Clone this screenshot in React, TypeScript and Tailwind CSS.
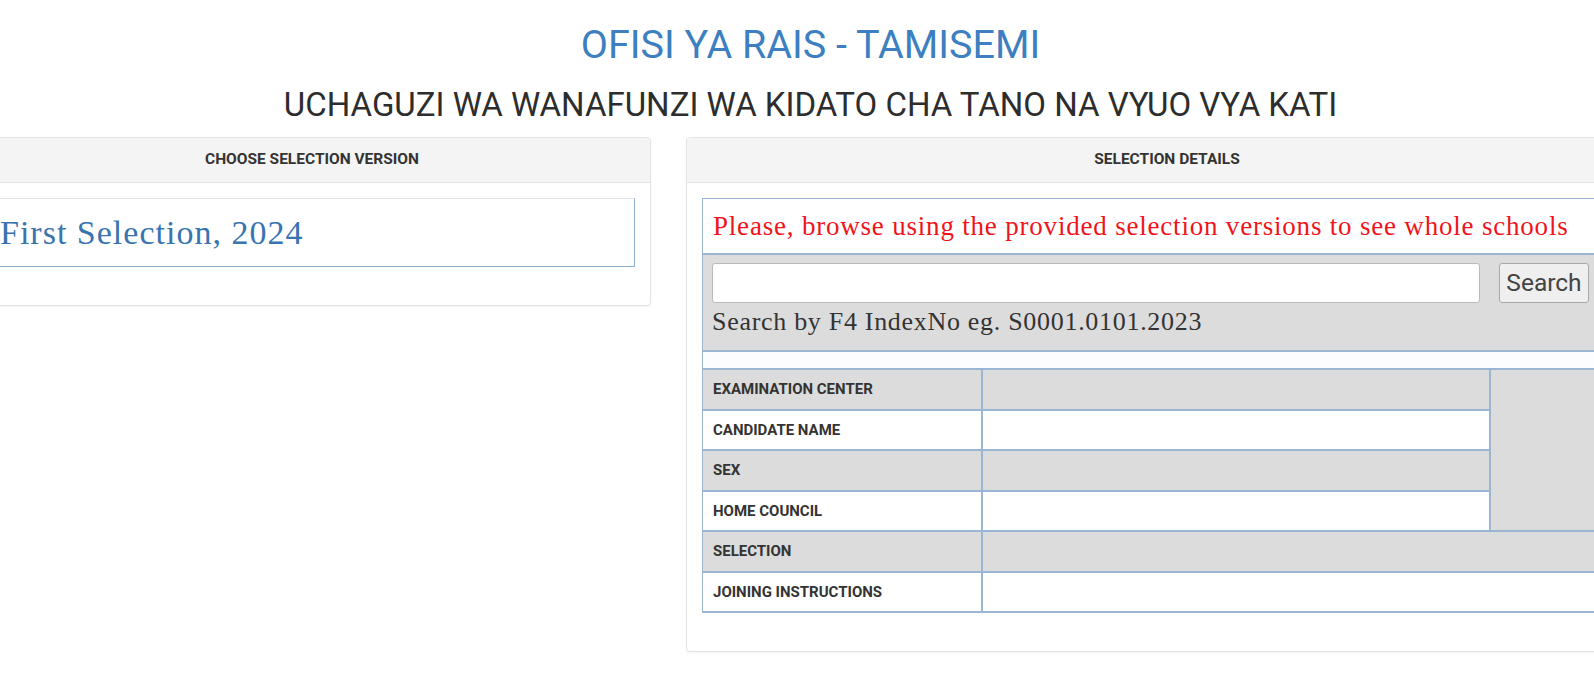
const rows = [
  { label: "EXAMINATION CENTER", gray: true },
  { label: "CANDIDATE NAME", gray: false },
  { label: "SEX", gray: true },
  { label: "HOME COUNCIL", gray: false },
];

const roboto = "font-['Roboto',sans-serif]";
const serif = "font-['Liberation_Serif','Times_New_Roman',serif]";
const line = "border-[#9ab6d3]";

function PanelHeader({ title }: { title: string }) {
  return (
    <div className={`h-[45px] flex items-center justify-center bg-[#f4f4f4] border-b border-[#e4e4e4] rounded-t-[4px] text-[15.5px] font-bold text-[#333] ${roboto}`}>
      {title}
    </div>
  );
}

function Row({ label, gray }: { label: string; gray: boolean }) {
  return (
    <div className={`h-[40.5px] flex border-b-2 ${line} ${gray ? "bg-[#dcdcdc]" : "bg-white"}`}>
      <div className={`w-[280px] flex items-center px-[10px] border-r-2 ${line}`}>{label}</div>
      <div className="flex-1" />
    </div>
  );
}

export default function App() {
  return (
    <div className="w-full h-[684px] overflow-hidden bg-white">
      <div className={`pl-[27px] text-center ${roboto}`}>
        <h1 className="pt-[22px] text-[39.5px] leading-[46px] text-[#3d7fc1]">OFISI YA RAIS - TAMISEMI</h1>
        <h2 className="mt-[18px] text-[33px] leading-[38px] text-[#2d2d2d]">
          UCHAGUZI WA WANAFUNZI WA KIDATO CHA TANO NA VYUO VYA KATI
        </h2>
      </div>

      <div className="ml-[-27px] w-[1675px] mt-[13px] flex items-start gap-[35px]">
        {/* LEFT: VERSIONS */}
        <div className="w-[678px] shrink-0 bg-white border border-[#e4e4e4] rounded-[4px] shadow-[0_1px_2px_rgba(0,0,0,0.05)]">
          <PanelHeader title="CHOOSE SELECTION VERSION" />
          <div className="px-[15px] pt-[15px] pb-[38px]">
            <div className="h-[69px] flex items-center px-[10px] border border-[#e3e3e3] border-r-[#8eb0d0] border-b-[#8eb0d0]">
              <span className={`text-[34px] leading-[39px] tracking-[1px] text-[#3a74b0] ${serif}`}>First Selection, 2024</span>
            </div>
          </div>
        </div>

        {/* RIGHT: DETAILS */}
        <div className="w-[962px] shrink-0 bg-white border border-[#e4e4e4] rounded-[4px] shadow-[0_1px_2px_rgba(0,0,0,0.05)]">
          <PanelHeader title="SELECTION DETAILS" />
          <div className="px-[15px] pt-[15px] pb-[38px]">
            <div className={`border-l border-t ${line}`}>
              <div className={`h-[54px] flex items-center px-[10px] text-[27px] leading-[31px] tracking-[0.8px] text-[#f0141a] ${serif}`}>
                Please, browse using the provided selection versions to see whole schools
              </div>
              <div className={`h-[97px] bg-[#dcdcdc] border-t-2 ${line} px-[9px] pt-[8px]`}>
                <div className="flex gap-[19px]">
                  <div className="w-[768px] h-[40px] bg-white border border-[#b9b9b9] rounded-[3px]" />
                  <button className={`w-[90px] h-[40px] bg-[#efefef] border border-[#a9a9a9] rounded-[3px] text-[24.5px] text-[#444] ${roboto}`}>
                    Search
                  </button>
                </div>
                <div className={`mt-[4px] text-[26px] leading-[30px] tracking-[0.7px] text-[#333] ${serif}`}>
                  Search by F4 IndexNo eg. S0001.0101.2023
                </div>
              </div>
              <div className={`h-[20px] bg-[#fbfdff] border-t-2 border-b-2 ${line}`} />
              <div className={`text-[15px] font-bold text-[#333] ${roboto}`}>
                <div className="flex">
                  <div className="flex-1 flex flex-col">
                    {rows.map((r) => (
                      <Row key={r.label} label={r.label} gray={r.gray} />
                    ))}
                  </div>
                  <div className={`w-[143px] bg-[#dcdcdc] border-l-2 border-b-2 ${line}`} />
                </div>
                <Row label="SELECTION" gray={true} />
                <Row label="JOINING INSTRUCTIONS" gray={false} />
              </div>
            </div>
          </div>
        </div>
      </div>
    </div>
  );
}
